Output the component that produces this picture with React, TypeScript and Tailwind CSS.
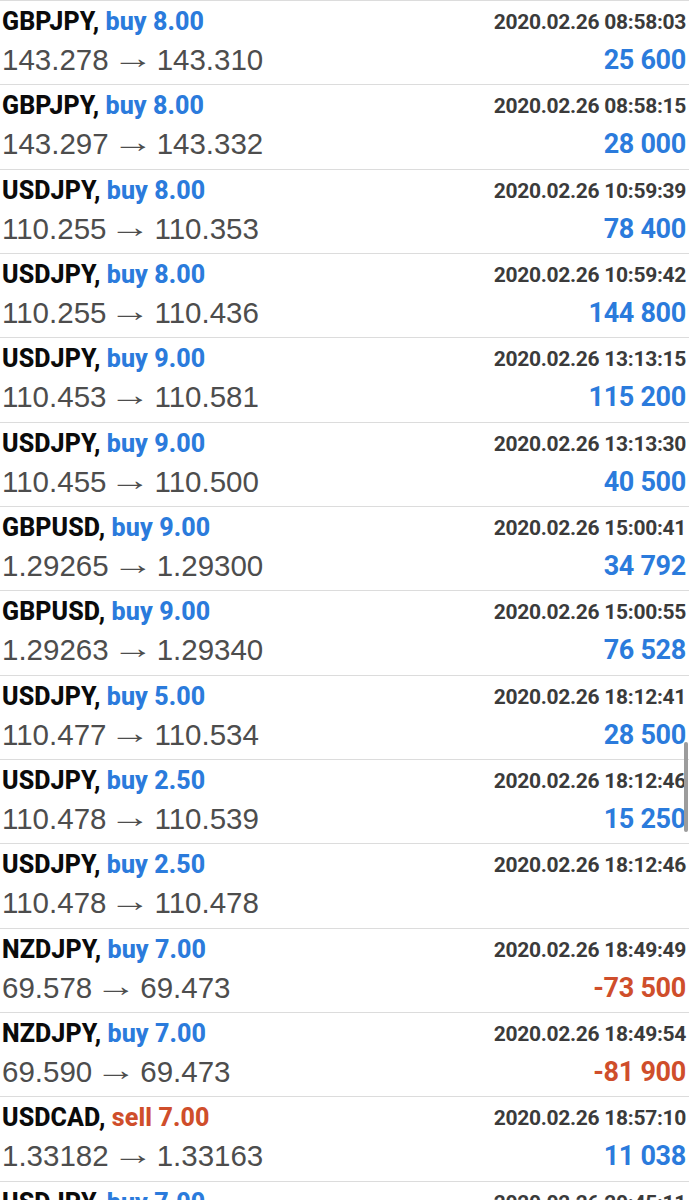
type Deal = {
  pair: string;
  side: "buy" | "sell";
  volume: string;
  time: string;
  open: string;
  close: string;
  profit: string;
};

const deals: Deal[] = [
  { pair: "GBPJPY", side: "buy", volume: "8.00", time: "2020.02.26 08:58:03", open: "143.278", close: "143.310", profit: "25 600" },
  { pair: "GBPJPY", side: "buy", volume: "8.00", time: "2020.02.26 08:58:15", open: "143.297", close: "143.332", profit: "28 000" },
  { pair: "USDJPY", side: "buy", volume: "8.00", time: "2020.02.26 10:59:39", open: "110.255", close: "110.353", profit: "78 400" },
  { pair: "USDJPY", side: "buy", volume: "8.00", time: "2020.02.26 10:59:42", open: "110.255", close: "110.436", profit: "144 800" },
  { pair: "USDJPY", side: "buy", volume: "9.00", time: "2020.02.26 13:13:15", open: "110.453", close: "110.581", profit: "115 200" },
  { pair: "USDJPY", side: "buy", volume: "9.00", time: "2020.02.26 13:13:30", open: "110.455", close: "110.500", profit: "40 500" },
  { pair: "GBPUSD", side: "buy", volume: "9.00", time: "2020.02.26 15:00:41", open: "1.29265", close: "1.29300", profit: "34 792" },
  { pair: "GBPUSD", side: "buy", volume: "9.00", time: "2020.02.26 15:00:55", open: "1.29263", close: "1.29340", profit: "76 528" },
  { pair: "USDJPY", side: "buy", volume: "5.00", time: "2020.02.26 18:12:41", open: "110.477", close: "110.534", profit: "28 500" },
  { pair: "USDJPY", side: "buy", volume: "2.50", time: "2020.02.26 18:12:46", open: "110.478", close: "110.539", profit: "15 250" },
  { pair: "USDJPY", side: "buy", volume: "2.50", time: "2020.02.26 18:12:46", open: "110.478", close: "110.478", profit: "" },
  { pair: "NZDJPY", side: "buy", volume: "7.00", time: "2020.02.26 18:49:49", open: "69.578", close: "69.473", profit: "-73 500" },
  { pair: "NZDJPY", side: "buy", volume: "7.00", time: "2020.02.26 18:49:54", open: "69.590", close: "69.473", profit: "-81 900" },
  { pair: "USDCAD", side: "sell", volume: "7.00", time: "2020.02.26 18:57:10", open: "1.33182", close: "1.33163", profit: "11 038" },
  { pair: "USDJPY", side: "buy", volume: "7.00", time: "2020.02.26 20:45:11", open: "110.520", close: "110.560", profit: "28 000" },
];

function DealRow({ deal }: { deal: Deal }) {
  const sideColor = deal.side === "buy" ? "text-[#2b7bdc]" : "text-[#cf4e2b]";
  const profitColor = deal.profit.startsWith("-") ? "text-[#cf4e2b]" : "text-[#2b7bdc]";
  return (
    <div className="h-[84.35px] shrink-0 border-b border-[#dcdcdc] pt-[2px] pl-[2px] pr-[3px]">
      <div className="flex h-[38px] items-center justify-between font-['Roboto',sans-serif]">
        <div className="text-[25px] font-extrabold leading-[38px] tracking-[0.1px] text-[#0b0b0b]">
          {deal.pair}, <span className={sideColor}>{deal.side} {deal.volume}</span>
        </div>
        <div className="text-[21px] font-bold leading-[38px] tracking-[-0.3px] text-[#3b3b3b]">{deal.time}</div>
      </div>
      <div className="flex h-[38px] items-center justify-between">
        <div className="flex items-center font-['Liberation_Sans',Arial,sans-serif] text-[29.5px] leading-[38px] text-[#4d4d4d]">
          <span>{deal.open}</span>
          <span className="inline-block w-[48px] -translate-y-[2px] scale-x-[1.4] text-center">→</span>
          <span>{deal.close}</span>
        </div>
        <div className={`font-['Roboto',sans-serif] text-[27px] font-bold leading-[38px] tracking-[-0.3px] ${profitColor}`}>
          {deal.profit}
        </div>
      </div>
    </div>
  );
}

export default function App() {
  return (
    <div className="relative h-[1200px] overflow-hidden bg-white">
      <div className="flex flex-col border-t border-[#dcdcdc]">
        {deals.map((d, i) => (
          <DealRow key={i} deal={d} />
        ))}
      </div>
      <div className="absolute right-[1px] top-[742px] h-[90px] w-[4px] rounded-full bg-[#9c9c9c]" />
    </div>
  );
}
